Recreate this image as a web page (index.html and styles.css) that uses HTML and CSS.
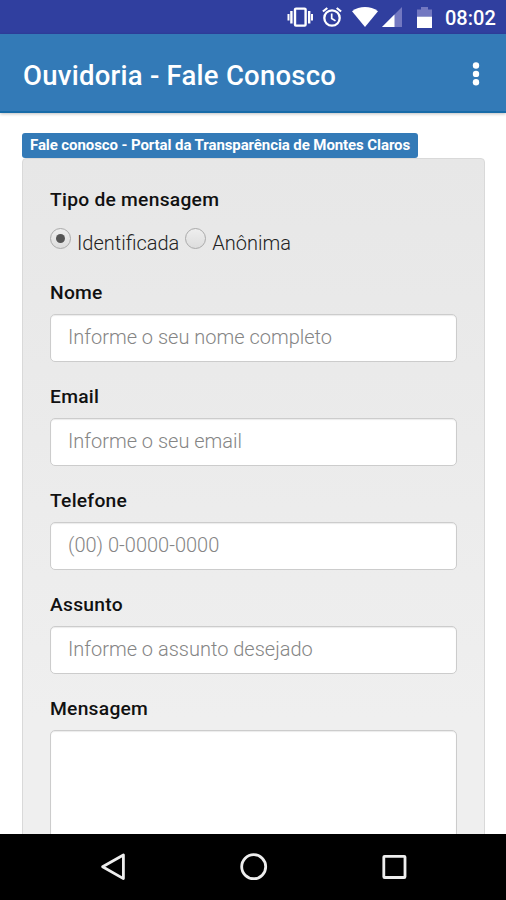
FILE: index.html
```html
<!DOCTYPE html>
<html lang="pt-BR">
<head>
<meta charset="utf-8">
<meta name="viewport" content="width=device-width">
<title>Ouvidoria - Fale Conosco</title>
<link rel="stylesheet" href="styles.css">
</head>
<body>
<div class="screen">
  <div class="status">
    <svg class="ic-vibrate" width="26" height="20" viewBox="0 0 26 20"><rect x="8" y="1.6" width="10.600" height="17" rx="1" fill="none" stroke="#fff" stroke-width="2.400"/><path d="M4.400 4v12.500M22.200 4v12.500" stroke="#fff" stroke-width="2.400"/><path d="M1.500 7v6.500M25 7v6.500" stroke="#fff" stroke-width="2"/></svg>
    <svg class="ic-alarm" width="20" height="20" viewBox="0 0 20 20" fill="none" stroke="#fff"><circle cx="10" cy="11" r="7.700" stroke-width="2.300"/><path d="M.9 4.500 5.300 1M19.100 4.500 14.700 1" stroke-width="2.200"/><path d="M9.700 6.500v5l3.800 2.400" stroke-width="1.700"/></svg>
    <svg class="ic-wifi" width="26" height="20" viewBox="0 0 26 20"><path d="M0 4.300C7.500-1.300 18.500-1.300 26 4.300L13 20Z" fill="#fff"/></svg>
    <svg class="ic-signal" width="20" height="20" viewBox="0 0 20 20"><path d="M20 0v20H0Z" fill="#7378c1"/><path d="M12.500 7.500V20H0Z" fill="#fff"/></svg>
    <svg class="ic-battery" width="15" height="21" viewBox="0 0 15 21"><path d="M0 2.500h4V0h7v2.500h4V9H0Z" fill="#7378c1"/><path d="M0 9.500h15V21H0Z" fill="#fff"/></svg>
    <span class="clock">08:02</span>
  </div>
  <header class="appbar">
    <h1>Ouvidoria - Fale Conosco</h1>
    <svg width="8" height="24" viewBox="0 0 8 24" fill="#fff"><circle cx="4" cy="3.500" r="3.200"/><circle cx="4" cy="11.900" r="3.200"/><circle cx="4" cy="20.300" r="3.200"/></svg>
  </header>
  <main class="content">
    <span class="tag">Fale conosco - Portal da Transparência de Montes Claros</span>
    <form class="well">
      <div class="label">Tipo de mensagem</div>
      <div class="radios">
        <label><i class="radio on"></i><span>Identificada</span></label>
        <label><i class="radio"></i><span>Anônima</span></label>
      </div>
      <div class="group"><label class="label">Nome</label><div class="field">Informe o seu nome completo</div></div>
      <div class="group"><label class="label">Email</label><div class="field">Informe o seu email</div></div>
      <div class="group"><label class="label">Telefone</label><div class="field">(00) 0-0000-0000</div></div>
      <div class="group"><label class="label">Assunto</label><div class="field">Informe o assunto desejado</div></div>
      <div class="group"><label class="label">Mensagem</label><div class="field area"></div></div>
    </form>
  </main>
  <nav class="navbar">
    <svg width="26" height="28" viewBox="0 0 26 28"><path d="M23.400 2v23.600L2.600 13.800Z" fill="none" stroke="#eee" stroke-width="2.800" stroke-linejoin="round"/></svg>
    <svg width="28" height="28" viewBox="0 0 28 28"><circle cx="13.700" cy="13.700" r="12" fill="none" stroke="#eee" stroke-width="2.800"/></svg>
    <svg width="26" height="26" viewBox="0 0 26 26"><rect x="2.800" y="2.300" width="21.200" height="21.200" rx=".8" fill="none" stroke="#eee" stroke-width="2.800"/></svg>
  </nav>
</div>
</body>
</html>
```
FILE: styles.css
```css
* { box-sizing: border-box; }
body { margin: 0; font-family: Roboto, sans-serif; background: #fff; }
.screen { height: 900px; display: flex; flex-direction: column; overflow: hidden; }

.status { flex: none; height: 34px; background: #303f9f; display: flex; align-items: center; padding: 0 11px 0 287px; color: #fff; }
.status svg { flex: none; }
.ic-alarm { margin-left: 9px; }
.ic-wifi { margin-left: 10px; }
.ic-signal { margin-left: 4px; }
.ic-battery { margin-left: 15px; }
.clock { margin-left: 13px; font-size: 20px; font-weight: 500; line-height: 34px; white-space: nowrap; padding-top: 2px; }

.appbar { flex: none; height: 79px; background: #337ab7; border-bottom: 2px solid #176ba8; display: flex; align-items: center; justify-content: space-between; padding: 3px 26px 0 23px; color: #fff; box-shadow: 0 1px 3px rgba(0,0,0,.25); }
.appbar h1 { margin: 2px 0 0; font-size: 27.5px; font-weight: 500; letter-spacing: .25px; white-space: nowrap; }

.content { flex: 1; min-height: 0; overflow: hidden; padding: 20px 21px 0 22px; display: flex; flex-direction: column; align-items: flex-start; }
.tag { flex: none; height: 25px; width: 396px; border-radius: 3px; background: #337ab7; color: #fff; font-size: 15px; font-weight: 700; letter-spacing: -.09px; line-height: 24px; padding-left: 8px; white-space: nowrap; }
.well { flex: none; width: 463px; height: 740px; border: 1px solid #d9d9d9; border-radius: 4px; background: linear-gradient(#e7e7e7, #efefef 560px); padding: 24px 27px; }
.label { display: block; height: 32px; line-height: 33px; font-size: 19.25px; font-weight: 500; letter-spacing: .25px; color: #111; white-space: nowrap; }
.radios { display: flex; gap: 6px; height: 61px; padding-top: 12px; font-size: 20px; font-weight: 300; line-height: 32px; color: #222; }
.radios label { display: flex; }
.radio { width: 21px; height: 21px; margin: 1px 6px 0 0; border-radius: 50%; border: 1px solid #aaa; background: linear-gradient(#eee, #ddd); display: grid; place-items: center; }
.radio.on::after { content: ""; width: 9px; height: 9px; border-radius: 50%; background: #555; }
.group { height: 104px; }
.field { margin-top: 6px; height: 48px; border: 1px solid #ccc; border-radius: 5px; background: #fff; box-shadow: inset 0 1px 1px rgba(0,0,0,.08); padding-left: 17px; font-size: 20px; font-weight: 300; line-height: 44px; color: #858585; white-space: nowrap; }
.area { height: 160px; }

.navbar { flex: none; height: 66px; background: #000; display: flex; align-items: center; justify-content: space-between; padding: 0 99px 0 100px; }
```
